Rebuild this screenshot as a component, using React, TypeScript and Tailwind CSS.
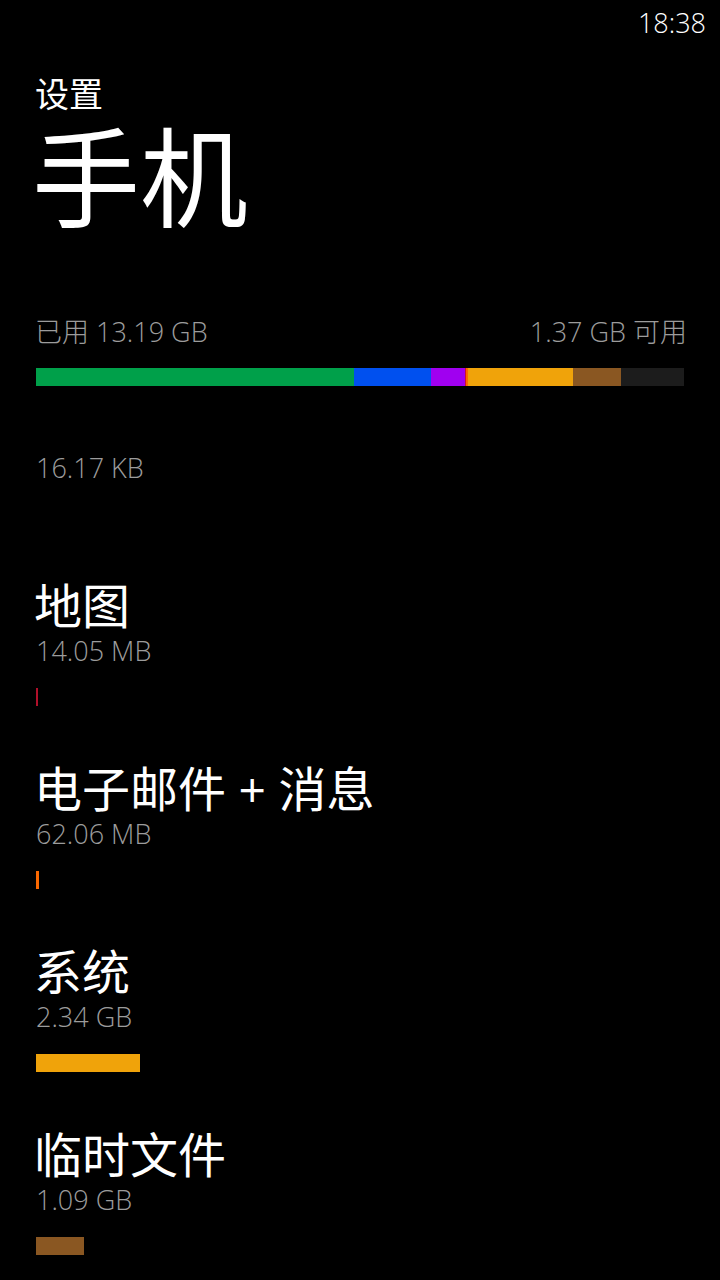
import React from "react";

const font = { fontFamily: '"Open Sans", "Noto Sans CJK SC", sans-serif' };

const segments = [
  { w: 318, c: "bg-[#00a04a]" },
  { w: 77, c: "bg-[#0050ef]" },
  { w: 34, c: "bg-[#a000f0]" },
  { w: 1, c: "bg-[#d0102a]" },
  { w: 2, c: "bg-[#fa6800]" },
  { w: 105, c: "bg-[#f0a30a]" },
  { w: 48, c: "bg-[#8a5722]" },
];

const items = [
  { title: "地图", size: "14.05 MB", bar: "w-[2px] bg-[#b0102a]" },
  { title: "电子邮件 + 消息", size: "62.06 MB", bar: "w-[3px] bg-[#fa6800]" },
  { title: "系统", size: "2.34 GB", bar: "w-[104px] bg-[#f0a30a]" },
  { title: "临时文件", size: "1.09 GB", bar: "w-[48px] bg-[#8a5722]" },
];

function StorageItem({ title, size, bar }: { title: string; size: string; bar: string }) {
  return (
    <div className="flex flex-col h-[183px]">
      <div className="-mt-[4px] -ml-[2px] text-[48px] leading-[56px] text-white whitespace-nowrap">{title}</div>
      <div className="text-[27px] leading-[34px] text-[#9c9c9c] font-light">{size}</div>
      <div className={`mt-[20px] h-[18px] ${bar}`} />
    </div>
  );
}

export default function App() {
  return (
    <div className="w-[720px] h-[1280px] bg-black overflow-hidden text-white" style={font}>
      <div className="flex justify-end h-[48px] pt-[6px] pr-[14px]">
        <span className="text-[27px] leading-[34px] font-light">18:38</span>
      </div>
      <div className="px-[36px]">
        <div className="mt-[26px] -ml-[1px] text-[34px] leading-[40px]">设置</div>
        <div className="mt-[6px] -ml-[4px] text-[108px] leading-[116px]">手机</div>

        <div className="mt-[79px] flex justify-between text-[27px] leading-[34px] text-[#9c9c9c] font-light">
          <span className="-ml-[1px]">已用 13.19 GB</span>
          <span className="-mr-[3px]">1.37 GB 可用</span>
        </div>
        <div className="mt-[19px] flex h-[18px] w-[648px] bg-[#1c1c1c]">
          {segments.map((s, i) => (
            <div key={i} className={`h-full ${s.c}`} style={{ width: s.w }} />
          ))}
        </div>

        <div className="mt-[68px] h-[128px] text-[27px] leading-[28px] text-[#9c9c9c] font-light">16.17 KB</div>

        {items.map((it) => (
          <StorageItem key={it.title} {...it} />
        ))}
      </div>
    </div>
  );
}
